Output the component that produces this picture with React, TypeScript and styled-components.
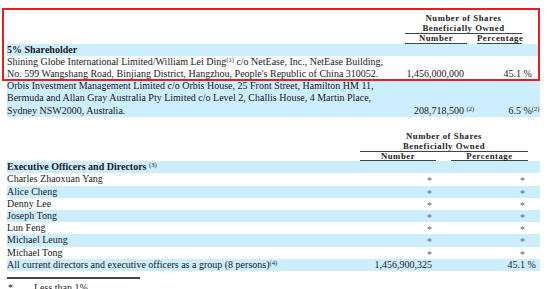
import React from "react";
import styled, { createGlobalStyle } from "styled-components";

const GlobalStyle = createGlobalStyle`
  html, body {
    margin: 0;
    padding: 0;
    background: #fff;
  }
  body {
    font-family: "Liberation Serif", "Times New Roman", serif;
    font-size: 10px;
    color: #1a1a1a;
    overflow: hidden;
  }
`;

const HOLDERS = {
  head: "398px 62px 10px 45px 18px",
  row: "398px 59px 13px 44px 19px",
};
const OFFICERS = {
  head: "353px 76px 15px 77px 12px",
  row: "353px 72px 19px 74px 15px",
};

const officers = [
  "Charles Zhaoxuan Yang",
  "Alice Cheng",
  "Denny Lee",
  "Joseph Tong",
  "Lun Feng",
  "Michael Leung",
  "Michael Tong",
];

const App = () => {
  return (
    <>
      <GlobalStyle />
      <Page>
        <Highlight>
          <SharesHead cols={HOLDERS.head} />
          <Row $cols={HOLDERS.row} $shaded>
            <Name $bold>5% Shareholder</Name>
          </Row>
          <Row $cols={HOLDERS.row}>
            <Name>
              Shining Globe International Limited/William Lei Ding<Note>(1)</Note>
              {"  "}c/o NetEase, Inc., NetEase Building,
              <br />
              No. 599 Wangshang Road, Binjiang District, Hangzhou, People's Republic of China 310052.
            </Name>
            <Num>1,456,000,000</Num>
            <Mark />
            <Num>45.1</Num>
            <Mark> %</Mark>
          </Row>
        </Highlight>
        <Row $cols={HOLDERS.row} $shaded>
          <Name>
            Orbis Investment Management Limited c/o Orbis House, 25 Front Street, Hamilton HM 11,
            <br />
            Bermuda and Allan Gray Australia Pty Limited c/o Level 2, Challis House, 4 Martin Place,
            <br />
            Sydney NSW2000, Australia.
          </Name>
          <Num>208,718,500</Num>
          <Mark>
            {" "}
            <Note>(2)</Note>
          </Mark>
          <Num>6.5</Num>
          <Mark>
            {" "}%<Note>(2)</Note>
          </Mark>
        </Row>

        <Table2>
          <SharesHead cols={OFFICERS.head} />
          <Row $cols={OFFICERS.row} $shaded>
            <Name $bold>
              Executive Officers and Directors <Note>(3)</Note>
            </Name>
          </Row>
          {officers.map((name, i) => (
            <Row key={name} $cols={OFFICERS.row} $shaded={i % 2 === 1}>
              <Name>{name}</Name>
              <Num>
                <Star>*</Star>
              </Num>
              <Mark />
              <Num>
                <Star>*</Star>
              </Num>
              <Mark />
            </Row>
          ))}
          <Row $cols={OFFICERS.row} $shaded>
            <Name>
              All current directors and executive officers as a group (8 persons)<Note>(4)</Note>
            </Name>
            <Num>1,456,900,325</Num>
            <Mark />
            <Num>45.1</Num>
            <Mark> %</Mark>
          </Row>
        </Table2>

        <FootRule />
        <FootNote>
          <span>*</span>
          <span>Less than 1%</span>
        </FootNote>
      </Page>
    </>
  );
};

const SharesHead = ({ cols }: { cols: string }) => (
  <Head $cols={cols}>
    <HeadTitle>
      Number of Shares
      <br />
      Beneficially Owned
    </HeadTitle>
    <HeadLabel $col={2}>Number</HeadLabel>
    <HeadLabel $col={4}>Percentage</HeadLabel>
  </Head>
);

export default App;

const Page = styled.div`
  width: 533px;
  padding: 13px 10px 0 7px;
`;

const Highlight = styled.div`
  position: relative;
  &::after {
    content: "";
    position: absolute;
    top: -5px;
    left: -5px;
    right: 0;
    bottom: -1px;
    border: 2.5px solid #ee1c22;
    pointer-events: none;
  }
`;

const Table2 = styled.div`
  margin-top: 14px;
`;

const Head = styled.div<{ $cols: string }>`
  display: grid;
  grid-template-columns: ${(p) => p.$cols};
  font-weight: 700;
  font-size: 8.7px;
  letter-spacing: 0.55px;
  color: #222;
`;

const HeadTitle = styled.div`
  grid-column: 2 / 5;
  text-align: center;
  line-height: 10px;
  border-bottom: 1.5px solid #444;
  white-space: nowrap;
`;

const HeadLabel = styled.div<{ $col: number }>`
  grid-row: 2;
  grid-column: ${(p) => p.$col};
  text-align: center;
  line-height: 8.5px;
  border-bottom: 1.5px solid #444;
  white-space: nowrap;
`;

const Row = styled.div<{ $cols: string; $shaded?: boolean }>`
  display: grid;
  grid-template-columns: ${(p) => p.$cols};
  align-items: end;
  line-height: 12.2px;
  background: ${(p) => (p.$shaded ? "#cdeefe" : "transparent")};
`;

const Name = styled.div<{ $bold?: boolean }>`
  white-space: nowrap;
  font-weight: ${(p) => (p.$bold ? 700 : 400)};
`;

const Num = styled.div`
  text-align: right;
  white-space: nowrap;
`;

const Mark = styled.div`
  white-space: pre;
`;

const Note = styled.sup`
  font-size: 6.5px;
  line-height: 0;
  vertical-align: 3px;
  font-weight: 400;
`;

const Star = styled.span`
  display: inline-block;
  color: #666;
  transform: translateY(2px);
`;

const FootRule = styled.div`
  width: 133px;
  height: 1.5px;
  margin-top: 6px;
  background: #444;
`;

const FootNote = styled.div`
  display: grid;
  grid-template-columns: 26px auto;
  line-height: 12.2px;
  margin-top: 3px;
  padding-left: 1px;
`;
